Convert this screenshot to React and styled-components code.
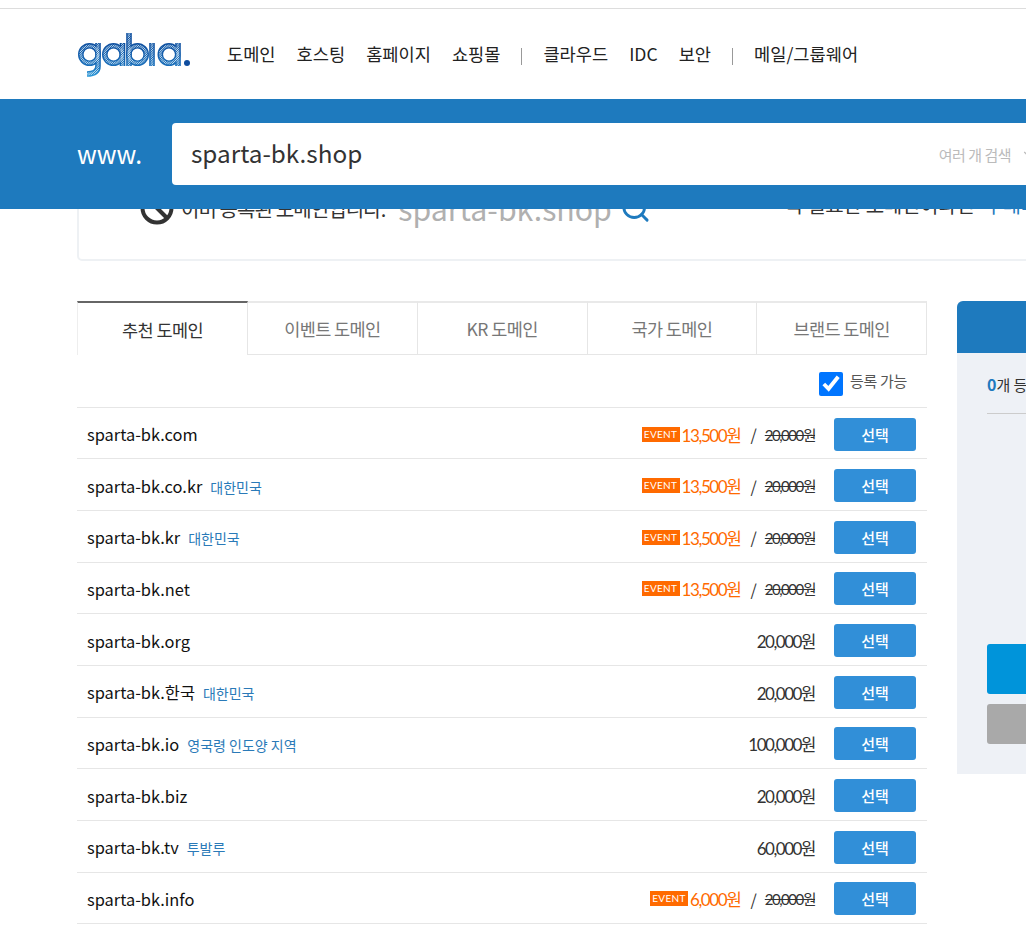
import React from 'react'
import styled, { createGlobalStyle } from 'styled-components'
import { Search, ChevronDown } from 'lucide-react'

const FONT = '"Noto Sans CJK KR", "Noto Sans", sans-serif'
const NUM_FONT = 'Lato, "Noto Sans CJK KR", sans-serif'

const GlobalStyle = createGlobalStyle`
  html, body {
    margin: 0;
    padding: 0;
    width: 1026px;
    height: 932px;
    overflow: hidden;
    background: #fff;
    font-family: ${FONT};
    color: #222;
  }
  * { box-sizing: border-box; }
`

const NAV = [
  ['도메인', '호스팅', '홈페이지', '쇼핑몰'],
  ['클라우드', 'IDC', '보안'],
  ['메일/그룹웨어'],
]

const TABS = ['추천 도메인', '이벤트 도메인', 'KR 도메인', '국가 도메인', '브랜드 도메인']

const ROWS = [
  { name: 'sparta-bk.com', event: '13,500원' },
  { name: 'sparta-bk.co.kr', tag: '대한민국', event: '13,500원' },
  { name: 'sparta-bk.kr', tag: '대한민국', event: '13,500원' },
  { name: 'sparta-bk.net', event: '13,500원' },
  { name: 'sparta-bk.org', price: '20,000원' },
  { name: 'sparta-bk.한국', tag: '대한민국', price: '20,000원' },
  { name: 'sparta-bk.io', tag: '영국령 인도양 지역', price: '100,000원' },
  { name: 'sparta-bk.biz', price: '20,000원' },
  { name: 'sparta-bk.tv', tag: '투발루', price: '60,000원' },
  { name: 'sparta-bk.info', event: '6,000원' },
]

function Logo() {
  const shapes = (
    <>
      <circle cx="11.5" cy="21.5" r="8.7" />
      <path d="M20 10 V33 Q20 41 9 41" />
      <circle cx="35.5" cy="21.5" r="8.7" />
      <path d="M44.5 10 V33" />
      <circle cx="59.5" cy="21.5" r="8.7" />
      <path d="M51 0 V33" />
      <path d="M74 10 V33" />
      <circle cx="91" cy="21.5" r="8.7" />
      <path d="M100 10 V33" />
    </>
  )
  return (
    <svg width="112" height="44" viewBox="0 0 112 44" fill="none">
      <defs>
        <linearGradient id="logoBlue" gradientUnits="userSpaceOnUse" x1="0" y1="10" x2="0" y2="44">
          <stop offset="0" stopColor="#0f4f9f" />
          <stop offset="0.7" stopColor="#1a70bb" />
          <stop offset="1" stopColor="#2b9ad9" />
        </linearGradient>
        <pattern id="logoHatch" width="1.6" height="1.6" patternUnits="userSpaceOnUse" patternTransform="rotate(45)">
          <rect width="0.7" height="1.6" fill="#d8eefa" />
        </pattern>
      </defs>
      <g stroke="url(#logoBlue)" strokeWidth="5.6">{shapes}</g>
      <g stroke="url(#logoHatch)" strokeWidth="2.8">{shapes}</g>
      <circle cx="109" cy="30" r="3" fill="#0f4c9e" />
    </svg>
  )
}

function BanIcon() {
  return (
    <svg width="34" height="34" viewBox="0 0 34 34" fill="none" stroke="#333" strokeWidth="4">
      <circle cx="17" cy="17" r="14.5" />
      <path d="M7 7 L27 27" />
    </svg>
  )
}

export default function App() {
  return (
    <Page>
      <GlobalStyle />
      <Header>
        <TopStrip />
        <NavBar>
          <Logo />
          <Nav>
            {NAV.map((group, i) => (
              <React.Fragment key={i}>
                {i > 0 && <NavDivider />}
                {group.map((item) => (
                  <NavItem key={item}>{item}</NavItem>
                ))}
              </React.Fragment>
            ))}
          </Nav>
        </NavBar>
        <SearchBar>
          <Www>www.</Www>
          <SearchBox>
            <SearchText>sparta-bk.shop</SearchText>
            <MultiSearch>
              여러 개 검색
              <ChevronDown size={14} />
            </MultiSearch>
          </SearchBox>
        </SearchBar>
      </Header>

      <Main>
        <Notice>
          <BanIcon />
          <NoticeText>이미 등록된 도메인입니다.</NoticeText>
          <NoticeDomain>sparta-bk.shop</NoticeDomain>
          <Search size={31} color="#1e7abe" strokeWidth={2.2} />
          <NoticeRight>
            꼭 필요한 도메인이라면 <BlueLink>구매대행 서비스를 이용하세요</BlueLink>
          </NoticeRight>
        </Notice>

        <Columns>
          <ListColumn>
            <Tabs>
              {TABS.map((tab, i) => (
                <Tab key={tab} $active={i === 0}>{tab}</Tab>
              ))}
            </Tabs>
            <FilterRow>
              <FilterLabel>
                <Check type="checkbox" defaultChecked />
                등록 가능
              </FilterLabel>
            </FilterRow>
            <List>
              {ROWS.map((row) => (
                <Row key={row.name}>
                  <NameCell>
                    <DomainName>{row.name}</DomainName>
                    {row.tag && <Country>{row.tag}</Country>}
                  </NameCell>
                  <PriceCell>
                    {row.event ? (
                      <>
                        <EventBadge>EVENT</EventBadge>
                        <Price $event>{row.event}</Price>
                        <Slash>/</Slash>
                        <OldPrice>20,000원</OldPrice>
                      </>
                    ) : (
                      <Price>{row.price}</Price>
                    )}
                  </PriceCell>
                  <SelectButton>선택</SelectButton>
                </Row>
              ))}
            </List>
          </ListColumn>

          <Cart>
            <CartHead>선택 도메인</CartHead>
            <CartBody>
              <CartCount><b>0</b>개 등록 신청</CartCount>
              <CartLine />
              <CartSpacer />
              <CartMainButton>등록 신청</CartMainButton>
              <CartSubButton>비우기</CartSubButton>
            </CartBody>
          </Cart>
        </Columns>
      </Main>
    </Page>
  )
}

const Page = styled.div`
  width: 1320px;
`

const Header = styled.header`
  position: sticky;
  top: 0;
  z-index: 10;
  background: #fff;
`

const TopStrip = styled.div`
  height: 9px;
  border-bottom: 1px solid #ddd;
`

const NavBar = styled.div`
  height: 90px;
  padding-left: 78px;
  display: flex;
  align-items: center;
  gap: 37px;
  svg { margin-top: 1px; }
`

const Nav = styled.nav`
  display: flex;
  align-items: center;
  gap: 21px;
`

const NavItem = styled.a`
  font-size: 17.6px;
  line-height: 24px;
  color: #222;
  white-space: nowrap;
`

const NavDivider = styled.span`
  width: 1px;
  height: 17px;
  margin-top: 4px;
  background: #999;
`

const SearchBar = styled.div`
  height: 110px;
  background: #1e7abe;
  padding: 24px 0 24px 77px;
  display: flex;
  align-items: center;
`

const Www = styled.span`
  width: 95px;
  margin-top: -3px;
  font-size: 24.7px;
  color: #fff;
`

const SearchBox = styled.div`
  width: 1000px;
  height: 62px;
  background: #fff;
  border-radius: 4px;
  padding: 0 19px;
  display: flex;
  align-items: center;
  justify-content: space-between;
`

const SearchText = styled.span`
  margin-top: -3px;
  font-size: 24.3px;
  color: #333;
`

const MultiSearch = styled.span`
  margin-right: 118px;
  display: flex;
  align-items: center;
  gap: 10px;
  font-size: 15px;
  letter-spacing: -0.5px;
  color: #bbb;
`

const Main = styled.main`
  padding-left: 77px;
  margin-top: -48px;
`

const Notice = styled.section`
  width: 1180px;
  height: 100px;
  border: 2px solid #eef1f4;
  border-radius: 5px;
  padding: 0 0 6px 61px;
  display: flex;
  align-items: center;
`

const NoticeText = styled.span`
  margin-left: 7px;
  font-size: 20px;
  letter-spacing: -0.9px;
  color: #333;
`

const NoticeDomain = styled.span`
  margin: 0 8px 0 13px;
  font-size: 30.3px;
  color: #b0b0b0;
`

const NoticeRight = styled.div`
  margin: 0 0 8px 134px;
  font-size: 20px;
  letter-spacing: -0.3px;
  color: #333;
  white-space: nowrap;
`

const BlueLink = styled.a`
  margin-left: 6px;
  color: #1e7abe;
`

const Columns = styled.div`
  margin-top: 40px;
  display: flex;
  align-items: flex-start;
  gap: 30px;
`

const ListColumn = styled.div`
  width: 850px;
`

const Tabs = styled.div`
  display: grid;
  grid-template-columns: 171px repeat(4, 1fr);
  height: 54px;
`

const Tab = styled.div`
  display: flex;
  align-items: center;
  justify-content: center;
  font-size: 17.5px;
  letter-spacing: -0.6px;
  color: ${(p) => (p.$active ? '#333' : '#777')};
  border-top: 2px solid ${(p) => (p.$active ? '#666' : '#e9e9e9')};
  border-right: 1px solid #e6e6e6;
  border-left: ${(p) => (p.$active ? '1px solid #eee' : 'none')};
  border-bottom: ${(p) => (p.$active ? 'none' : '1px solid #e6e6e6')};
`

const FilterRow = styled.div`
  height: 51.6px;
  padding-right: 20px;
  display: flex;
  align-items: center;
  justify-content: flex-end;
`

const FilterLabel = styled.label`
  display: flex;
  align-items: center;
  gap: 7px;
  font-size: 15px;
  letter-spacing: -0.3px;
  color: #555;
`

const Check = styled.input`
  width: 24px;
  height: 24px;
  margin: 6px 0 0;
`

const List = styled.div`
  border-top: 1px solid #e6e6e6;
`

const Row = styled.div`
  height: 51.67px;
  padding: 2.2px 11px 0 10px;
  border-bottom: 1px solid #e6e6e6;
  display: flex;
  align-items: center;
`

const NameCell = styled.div`
  flex: 1;
  display: flex;
  align-items: baseline;
  gap: 8px;
`

const DomainName = styled.span`
  font-size: 16.4px;
  color: #111;
`

const Country = styled.span`
  font-size: 14px;
  color: #2a7ab8;
`

const PriceCell = styled.div`
  display: flex;
  align-items: center;
`

const EventBadge = styled.span`
  width: 38px;
  height: 15px;
  margin-right: 2px;
  background: #ff6a00;
  color: #fff;
  font-family: ${NUM_FONT};
  font-size: 10px;
  letter-spacing: 0.3px;
  line-height: 15px;
  text-align: center;
`

const Price = styled.span`
  font-family: ${NUM_FONT};
  font-size: 17px;
  letter-spacing: ${(p) => (p.$event ? '-1.4px' : '-1.5px')};
  color: ${(p) => (p.$event ? '#ff6a00' : '#333')};
`

const Slash = styled.span`
  margin: 0 8px 0 10px;
  font-size: 16px;
  color: #333;
`

const OldPrice = styled.span`
  font-family: ${NUM_FONT};
  font-size: 15px;
  letter-spacing: -1.5px;
  color: #333;
  text-decoration: line-through;
`

const SelectButton = styled.button`
  width: 82px;
  height: 33px;
  margin-left: 19px;
  padding: 0;
  border: 0;
  border-radius: 3px;
  background: #318fd8;
  color: #fff;
  font-family: ${FONT};
  font-size: 15px;
  font-weight: 500;
`

const Cart = styled.aside`
  width: 300px;
  height: 473px;
  background: #eef1f6;
  border-radius: 6px 6px 0 0;
  display: flex;
  flex-direction: column;
`

const CartHead = styled.div`
  height: 52px;
  background: #1e7abe;
  border-radius: 6px 6px 0 0;
  color: #fff;
  font-size: 18px;
  line-height: 52px;
  text-align: center;
`

const CartBody = styled.div`
  flex: 1;
  padding: 19px 30px 30px;
  display: flex;
  flex-direction: column;
`

const CartCount = styled.div`
  font-size: 15px;
  line-height: 24px;
  color: #333;
  b { color: #1e7abe; font-size: 16px; }
`

const CartLine = styled.div`
  height: 1px;
  margin-top: 16px;
  background: #ccc;
`

const CartSpacer = styled.div`
  flex: 1;
`

const CartMainButton = styled.button`
  height: 50px;
  border: 0;
  border-radius: 3px;
  background: #0094da;
  color: #fff;
  font-family: ${FONT};
  font-size: 18px;
`

const CartSubButton = styled.button`
  height: 40px;
  margin-top: 10px;
  border: 0;
  border-radius: 3px;
  background: #a9a9a9;
  color: #fff;
  font-family: ${FONT};
  font-size: 15px;
`
